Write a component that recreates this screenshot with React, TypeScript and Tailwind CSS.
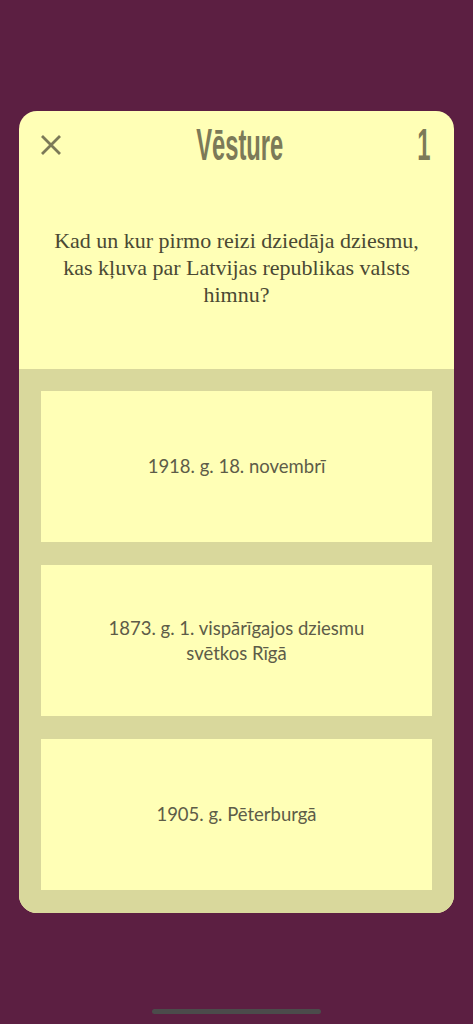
import React from "react";

const answers = [
  ["1918. g. 18. novembrī"],
  ["1873. g. 1. vispārīgajos dziesmu", "svētkos Rīgā"],
  ["1905. g. Pēterburgā"],
];

export default function App() {
  return (
    <div className="w-[473px] h-[1024px] bg-[#5c1f42] flex flex-col relative overflow-hidden">
      <div className="h-[111px] shrink-0" />
      <div className="mx-[19px] rounded-[18px] overflow-hidden bg-[#ffffb6] flex flex-col">
        {/* header + question */}
        <div className="h-[258px] flex flex-col">
          <div className="flex items-center justify-between h-[68px] pl-[22px] pr-[24px]">
            <svg width="20" height="20" viewBox="0 0 20 20" className="mt-[-1px]">
              <path d="M1 1 L19 19 M19 1 L1 19" stroke="#7c7a58" strokeWidth="2.8" strokeLinecap="butt" />
            </svg>
            <div
              className="text-[44px] font-bold text-[#7c7a58] leading-none origin-center scale-x-[0.54] ml-[12px]"
              style={{ fontFamily: '"Liberation Sans", Arial, sans-serif' }}
            >
              Vēsture
            </div>
            <div
              className="text-[44px] font-bold text-[#7c7a58] leading-none scale-x-[0.54] origin-right"
              style={{ fontFamily: '"Liberation Sans", Arial, sans-serif' }}
            >
              1
            </div>
          </div>
          <div
            className="mt-[48px] px-[24px] text-center text-[22px] leading-[27px] text-[#4a4933]"
            style={{ fontFamily: '"Liberation Serif", "Times New Roman", serif' }}
          >
            Kad un kur pirmo reizi dziedāja dziesmu,
            <br />
            kas kļuva par Latvijas republikas valsts
            <br />
            himnu?
          </div>
        </div>
        {/* answers */}
        <div className="bg-[#d9d89c] p-[22px] pb-[23px] flex flex-col gap-[23px]">
          {answers.map((lines, i) => (
            <div
              key={i}
              className="h-[151px] bg-[#ffffb6] flex items-center justify-center text-center text-[18.5px] leading-[25px] text-[#5d5c48]"
              style={{ fontFamily: 'Lato, "Noto Sans", sans-serif' }}
            >
              <div>
                {lines.map((l, j) => (
                  <div key={j}>{l}</div>
                ))}
              </div>
            </div>
          ))}
        </div>
      </div>
      <div className="absolute left-[152px] top-[1009px] w-[169px] h-[5px] rounded-full bg-[#4b4b4b]" />
    </div>
  );
}
